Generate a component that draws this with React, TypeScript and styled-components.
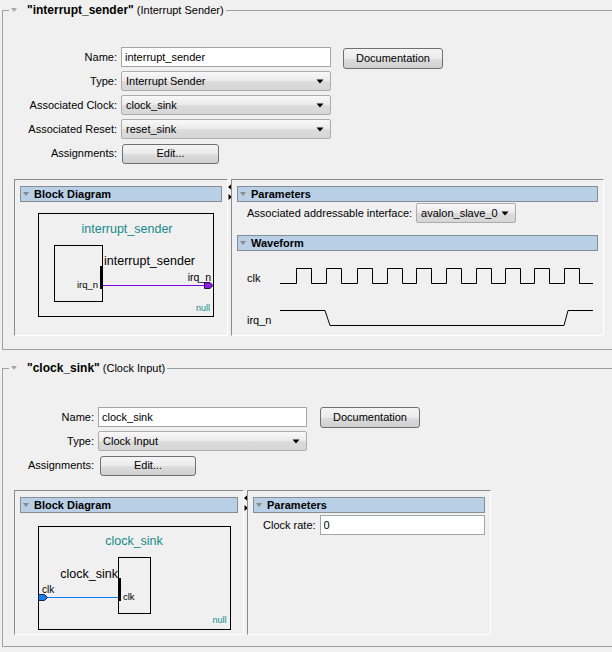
import styled, { createGlobalStyle } from "styled-components";

const GlobalStyle = createGlobalStyle`
	html, body {
		margin: 0;
		padding: 0;
		background: #f0f0f0;
	}
	body {
		font-family: "Liberation Sans", Arial, sans-serif;
		font-size: 11px;
		color: #000;
	}
`;

const CLK_RISES = [16, 46, 77, 107, 136, 166, 196, 225, 254, 284];

const clkPath = () => {
	let d = "M0 16.5";
	CLK_RISES.forEach((r) => {
		d += ` H${r + 0.5} V1.5 H${r + 15.5} V16.5`;
	});
	return d + " H313";
};

const DownArrow = () => (
	<svg width="8" height="5" viewBox="0 0 8 5">
		<path d="M0.5 0.5 H7.5 L4 4.5 Z" fill="#000" />
	</svg>
);

interface ComboProps {
	value: string;
	width?: number;
}

const Combo = ({ value, width }: ComboProps) => (
	<ComboBox $width={width}>
		<span>{value}</span>
		<DownArrow />
	</ComboBox>
);

const Splitter = () => (
	<SplitterBar>
		<svg width="4" height="16" viewBox="0 0 4 16">
			<path d="M3.5 0 V6 L0 3 Z" fill="#000" />
			<path d="M0.5 10 V16 L4 13 Z" fill="#000" />
		</svg>
	</SplitterBar>
);

const SenderDiagram = () => (
	<Diagram width="176" height="104" viewBox="0 0 176 104">
		<rect x="0.5" y="0.5" width="175" height="103" fill="none" stroke="#000" />
		<text x="89" y="20" textAnchor="middle" fill="#168a8a" fontSize="12.5">
			interrupt_sender
		</text>
		<rect x="16.5" y="32.5" width="48" height="56" fill="none" stroke="#000" />
		<rect x="62" y="53" width="3" height="23" fill="#000" />
		<text x="66" y="52" fontSize="12.5">
			interrupt_sender
		</text>
		<text x="60" y="74.5" textAnchor="end" fontSize="9.5">
			irq_n
		</text>
		<line x1="65" y1="72.5" x2="167" y2="72.5" stroke="#7b00d9" />
		<polygon points="166.5,69.5 172,69.5 175,72.5 172,75.5 166.5,75.5" fill="#8a1ee6" stroke="#2a0a4a" />
		<text x="173" y="67.5" textAnchor="end" fontSize="10.5">
			irq_n
		</text>
		<text x="172" y="97.5" textAnchor="end" fill="#168a8a" fontSize="9">
			null
		</text>
	</Diagram>
);

const SinkDiagram = () => (
	<Diagram width="193" height="104" viewBox="0 0 193 104">
		<rect x="0.5" y="0.5" width="192" height="103" fill="none" stroke="#000" />
		<text x="96" y="19" textAnchor="middle" fill="#168a8a" fontSize="12.5">
			clock_sink
		</text>
		<rect x="80.5" y="31.5" width="32" height="56" fill="none" stroke="#000" />
		<rect x="80" y="52" width="3" height="23" fill="#000" />
		<text x="80" y="51.5" textAnchor="end" fontSize="12.5">
			clock_sink
		</text>
		<text x="85" y="74" fontSize="9.5">
			clk
		</text>
		<line x1="9" y1="71.5" x2="80" y2="71.5" stroke="#0a7cff" />
		<polygon points="0.5,68.5 6.5,68.5 9.5,71.5 6.5,74.5 0.5,74.5" fill="#1e7be0" stroke="#0a2a55" />
		<text x="4" y="67" fontSize="10">
			clk
		</text>
		<text x="188.5" y="97" textAnchor="end" fill="#168a8a" fontSize="9">
			null
		</text>
	</Diagram>
);

const App = () => {
	return (
		<Page>
			<GlobalStyle />

			<Section $bottom={13}>
				<Legend>
					<TitleTriangle />
					<TitleName>"interrupt_sender"</TitleName> (Interrupt Sender)
				</Legend>

				<FormGrid $labelWidth={114} $fieldWidth={210} $top={29}>
					<Label>Name:</Label>
					<TextField defaultValue="interrupt_sender" readOnly />
					<Button $width={100} $height={21} $shift={8} $top={1}>
						Documentation
					</Button>
					<Label>Type:</Label>
					<Combo value="Interrupt Sender" />
					<span />
					<Label>Associated Clock:</Label>
					<Combo value="clock_sink" />
					<span />
					<Label>Associated Reset:</Label>
					<Combo value="reset_sink" />
					<span />
					<Label>Assignments:</Label>
					<Button $width={97} $height={20} $shift={1} $top={1}>
						Edit...
					</Button>
				</FormGrid>

				<PanelRow $top={16} $height={157}>
					<Panel $width={214}>
						<HeaderBar>
							<HeaderTriangle />
							Block Diagram
						</HeaderBar>
						<DiagramSlot $top={11}>
							<SenderDiagram />
						</DiagramSlot>
					</Panel>
					<Splitter />
					<Panel $width={373}>
						<HeaderBar>
							<HeaderTriangle />
							Parameters
						</HeaderBar>
						<ParamRow $top={1}>
							<span>Associated addressable interface:</span>
							<Combo value="avalon_slave_0" width={100} />
						</ParamRow>
						<HeaderBar $top={12}>
							<HeaderTriangle />
							Waveform
						</HeaderBar>
						<WaveRow $top={16}>
							<WaveLabel>clk</WaveLabel>
							<svg width="314" height="18" viewBox="0 0 314 18">
								<path d={clkPath()} fill="none" stroke="#000" />
							</svg>
						</WaveRow>
						<WaveRow $top={24}>
							<WaveLabel>irq_n</WaveLabel>
							<svg width="314" height="18" viewBox="0 0 314 18">
								<path d="M0 1.5 H45 L50 16.5 H284 L288 1.5 H313" fill="none" stroke="#000" />
							</svg>
						</WaveRow>
					</Panel>
				</PanelRow>
			</Section>

			<Section $bottom={11} $gap={10}>
				<Legend>
					<TitleTriangle />
					<TitleName>"clock_sink"</TitleName> (Clock Input)
				</Legend>

				<FormGrid $labelWidth={91} $fieldWidth={209} $top={31}>
					<Label>Name:</Label>
					<TextField defaultValue="clock_sink" readOnly />
					<Button $width={100} $height={21} $shift={9} $top={0}>
						Documentation
					</Button>
					<Label>Type:</Label>
					<Combo value="Clock Input" />
					<span />
					<Label>Assignments:</Label>
					<Button $width={96} $height={20} $shift={2} $top={1}>
						Edit...
					</Button>
				</FormGrid>

				<PanelRow $top={15} $height={145}>
					<Panel $width={230}>
						<HeaderBar>
							<HeaderTriangle />
							Block Diagram
						</HeaderBar>
						<DiagramSlot $top={13}>
							<SinkDiagram />
						</DiagramSlot>
					</Panel>
					<Splitter />
					<Panel $width={244}>
						<HeaderBar>
							<HeaderTriangle />
							Parameters
						</HeaderBar>
						<ParamRow $top={2}>
							<span>Clock rate:</span>
							<TextField defaultValue="0" readOnly $width={166} />
						</ParamRow>
					</Panel>
				</PanelRow>
			</Section>
		</Page>
	);
};

export default App;

const Page = styled.div`
	width: 612px;
	height: 652px;
	overflow: hidden;
	box-sizing: border-box;
	padding-top: 2px;
	background: #f0f0f0;
`;

const Section = styled.fieldset<{ $bottom: number; $gap?: number }>`
	margin: ${(p) => p.$gap ?? 0}px 0 0 2px;
	padding: 0 0 ${(p) => p.$bottom}px 0;
	width: 640px;
	min-width: 0;
	box-sizing: border-box;
	border: 1px solid #a0a0a0;
`;

const Legend = styled.legend`
	margin-left: 6px;
	padding: 0 2px;
	height: 16px;
	line-height: 16px;
	font-size: 11px;
	white-space: nowrap;
`;

const TitleTriangle = styled.span`
	display: inline-block;
	vertical-align: middle;
	margin: -3px 10px 0 0;
	width: 0;
	height: 0;
	border-left: 3.5px solid transparent;
	border-right: 3.5px solid transparent;
	border-top: 4px solid #a8a8a8;
`;

const TitleName = styled.span`
	font-weight: bold;
	font-size: 12px;
`;

const FormGrid = styled.div<{ $labelWidth: number; $fieldWidth: number; $top: number }>`
	display: grid;
	grid-template-columns: ${(p) => p.$labelWidth}px ${(p) => p.$fieldWidth}px auto;
	grid-auto-rows: 20px;
	column-gap: 4px;
	row-gap: 4px;
	align-items: center;
	margin-top: ${(p) => p.$top}px;
`;

const Label = styled.label`
	text-align: right;
	white-space: nowrap;
`;

const TextField = styled.input<{ $width?: number }>`
	box-sizing: border-box;
	width: ${(p) => (p.$width ? `${p.$width}px` : "100%")};
	height: 20px;
	margin: 0;
	padding: 0 3px;
	border: 1px solid #a5a5a5;
	background: #fff;
	font-family: "Liberation Sans", Arial, sans-serif;
	font-size: 11px;
	color: #000;
	outline: none;
`;

const ComboBox = styled.div<{ $width?: number }>`
	box-sizing: border-box;
	width: ${(p) => (p.$width ? `${p.$width}px` : "100%")};
	height: 20px;
	display: flex;
	align-items: center;
	justify-content: space-between;
	padding: 0 6px 0 4px;
	border: 1px solid #acacac;
	border-radius: 2px;
	background: linear-gradient(#f8f8f8, #eaeaea 50%, #dcdcdc 51%, #d6d6d6);
	white-space: nowrap;
`;

const Button = styled.button<{ $width: number; $height: number; $shift: number; $top: number }>`
	justify-self: start;
	align-self: start;
	box-sizing: border-box;
	width: ${(p) => p.$width}px;
	height: ${(p) => p.$height}px;
	margin: ${(p) => p.$top}px 0 0 ${(p) => p.$shift}px;
	padding: 0 0 2px;
	border: 1px solid #707070;
	border-radius: 3px;
	background: linear-gradient(#f4f4f4, #ebebeb 50%, #dddddd 51%, #cfcfcf);
	font-family: "Liberation Sans", Arial, sans-serif;
	font-size: 11px;
	color: #000;
`;

const PanelRow = styled.div<{ $top: number; $height: number }>`
	display: flex;
	height: ${(p) => p.$height}px;
	margin: ${(p) => p.$top}px 0 0 11px;
`;

const Panel = styled.div<{ $width: number }>`
	box-sizing: border-box;
	width: ${(p) => p.$width}px;
	display: flex;
	flex-direction: column;
	padding: 6px 5px 0 5px;
	border-top: 1px solid #8c8c8c;
	border-left: 1px solid #8c8c8c;
	border-right: 1px solid #fff;
	border-bottom: 1px solid #fff;
`;

const SplitterBar = styled.div`
	width: 3px;
	padding-top: 5px;
	overflow: visible;

	svg {
		display: block;
	}
`;

const HeaderBar = styled.div<{ $top?: number }>`
	box-sizing: border-box;
	height: 16px;
	margin-top: ${(p) => p.$top ?? 0}px;
	display: flex;
	align-items: center;
	padding-left: 2px;
	border: 1px solid #858d96;
	background: #b8cfe6;
	font-weight: bold;
	font-size: 11px;
	white-space: nowrap;
`;

const HeaderTriangle = styled.span`
	width: 0;
	height: 0;
	margin: -1px 5px 0 0;
	border-left: 3.5px solid transparent;
	border-right: 3.5px solid transparent;
	border-top: 4px solid #8a8a8a;
`;

const DiagramSlot = styled.div<{ $top: number }>`
	margin: ${(p) => p.$top}px 0 0 18px;
`;

const Diagram = styled.svg`
	display: block;
	font-family: "Liberation Sans", Arial, sans-serif;
`;

const ParamRow = styled.div<{ $top: number }>`
	display: flex;
	align-items: center;
	gap: 4px;
	margin-top: ${(p) => p.$top}px;
	padding-left: 10px;
	white-space: nowrap;
`;

const WaveRow = styled.div<{ $top: number }>`
	display: flex;
	align-items: flex-end;
	margin-top: ${(p) => p.$top}px;
	padding-left: 10px;

	svg {
		display: block;
	}
`;

const WaveLabel = styled.span`
	width: 33px;
	line-height: 13px;
	font-size: 11px;
`;
